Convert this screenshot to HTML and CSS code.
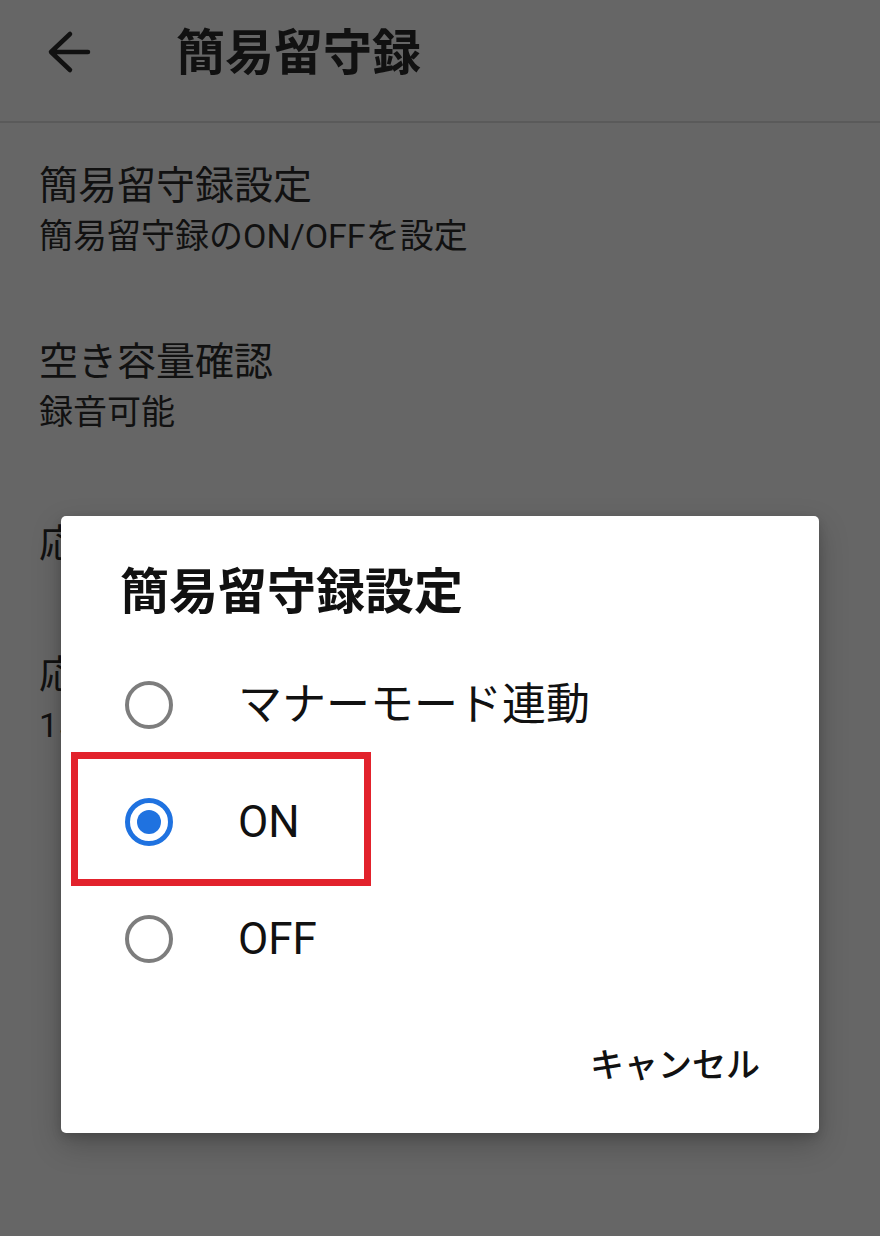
FILE: index.html
```html
<!DOCTYPE html>
<html lang="ja">
<head>
<meta charset="utf-8">
<title>簡易留守録</title>
<link rel="stylesheet" href="styles.css">
</head>
<body>
<div class="screen">
  <header class="appbar">
    <div class="appbar-row">
      <svg class="back" width="48" height="48" viewBox="0 0 48 48" aria-hidden="true">
        <path d="M43 24H6M25 6L6 24l19 18" fill="none" stroke="#111" stroke-width="4.5" stroke-linecap="round" stroke-linejoin="round"/>
      </svg>
      <h1 class="appbar-title">簡易留守録</h1>
    </div>
  </header>
  <ul class="prefs">
    <li class="pref">
      <div class="pref-title">簡易留守録設定</div>
      <div class="pref-sub">簡易留守録のON/OFFを設定</div>
    </li>
    <li class="pref">
      <div class="pref-title">空き容量確認</div>
      <div class="pref-sub">録音可能</div>
    </li>
    <li class="pref pref-single">
      <div class="pref-title">応答メッセージ</div>
    </li>
    <li class="pref">
      <div class="pref-title">応答時間</div>
      <div class="pref-sub">15秒</div>
    </li>
  </ul>

  <div class="dialog">
    <h2 class="dialog-title">簡易留守録設定</h2>
    <ul class="choices">
      <li class="choice">
        <span class="radio"></span>
        <span class="choice-label">マナーモード連動</span>
      </li>
      <li class="choice">
        <span class="radio radio-on"></span>
        <span class="choice-label">ON</span>
        <span class="highlight"></span>
      </li>
      <li class="choice">
        <span class="radio"></span>
        <span class="choice-label">OFF</span>
      </li>
    </ul>
    <div class="actions">
      <span class="btn">キャンセル</span>
    </div>
  </div>
</div>
</body>
</html>
```
FILE: styles.css
```css
* { box-sizing: border-box; }
html, body {
  margin: 0;
  padding: 0;
  background: #666666;
}
body {
  font-family: Roboto, "Noto Sans CJK JP", sans-serif;
  color: #111111;
}
.screen {
  position: relative;
  width: 880px;
  height: 1236px;
  overflow: hidden;
  background: #666666;
}
.appbar {
  height: 123px;
  padding-bottom: 17px;
  border-bottom: 2px solid #5a5a5a;
}
.appbar-row {
  height: 104px;
  display: flex;
  align-items: center;
  padding-left: 45px;
}
.back { flex: none; display: block; }
.appbar-title {
  margin: 4px 0 0 83px;
  font-size: 49px;
  font-weight: 700;
  line-height: 58px;
  color: #111;
}
.prefs {
  list-style: none;
  margin: 0;
  padding: 0;
}
.pref {
  padding: 38px 0 38px 39px;
  display: flex;
  flex-direction: column;
  justify-content: center;
}
.pref-single {
  min-height: 137px;
  padding-top: 0;
  padding-bottom: 0;
}
.pref-title {
  font-size: 39px;
  line-height: 50px;
}
.pref-sub {
  font-size: 34px;
  line-height: 50px;
}
.dialog {
  position: absolute;
  left: 61px;
  top: 516px;
  width: 758px;
  height: 617px;
  background: #ffffff;
  border-radius: 5px;
  box-shadow: 0 12px 30px rgba(0, 0, 0, 0.22), 0 4px 10px rgba(0, 0, 0, 0.15);
  padding: 48px 0 0 0;
  display: flex;
  flex-direction: column;
}
.dialog-title {
  margin: 0;
  padding-left: 59px;
  font-size: 49px;
  font-weight: 700;
  line-height: 58px;
  color: #111;
}
.choices {
  list-style: none;
  margin: 24px 0 0 0;
  padding: 0;
}
.choice {
  position: relative;
  height: 117px;
  display: flex;
  align-items: center;
  padding-left: 64px;
}
.radio {
  flex: none;
  width: 48px;
  height: 48px;
  border-radius: 50%;
  border: 4px solid #7d7d7d;
  position: relative;
}
.radio-on {
  border: 5px solid #1f72e0;
}
.radio-on::after {
  content: "";
  position: absolute;
  left: 7px;
  top: 7px;
  width: 24px;
  height: 24px;
  border-radius: 50%;
  background: #1f72e0;
}
.choice-label {
  margin-left: 65px;
  font-size: 44px;
  line-height: 56px;
  color: #111;
}
.highlight {
  position: absolute;
  left: 10px;
  top: -11px;
  width: 300px;
  height: 134px;
  border: 7px solid #e2222c;
}
.actions {
  margin-top: auto;
  padding: 0 59px 44px 0;
  display: flex;
  justify-content: flex-end;
}
.btn {
  font-size: 34px;
  font-weight: 500;
  line-height: 48px;
  color: #111;
}
```
